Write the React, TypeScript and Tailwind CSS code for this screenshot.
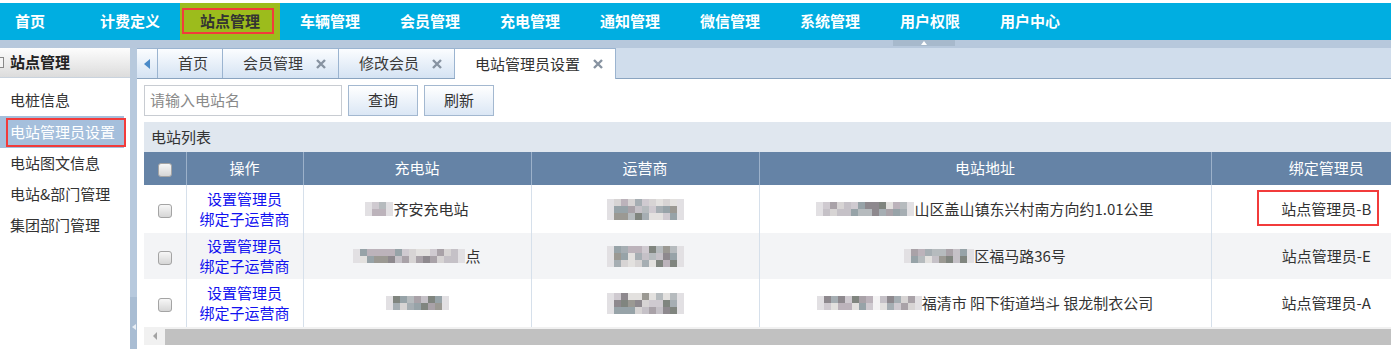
import React from 'react';

const navItems = ['首页', '计费定义', '站点管理', '车辆管理', '会员管理', '充电管理', '通知管理', '微信管理', '系统管理', '用户权限', '用户中心'];
const sideItems = ['电桩信息', '电站管理员设置', '电站图文信息', '电站&部门管理', '集团部门管理'];

const palette = ['#8e898e', '#a9a2a8', '#c5c1c7', '#b6bbbe', '#9b9993', '#d7d4d4', '#80857f', '#bcb3bb', '#e3e1df', '#a6aeb3', '#cfcad0', '#97a3a8'];

// pixelated (blurred) text block
function Mosaic({ cols, rows = 2, seed, gapAt }: { cols: number; rows?: number; seed: number; gapAt?: number }) {
  const cells: React.ReactNode[] = [];
  for (let r = 0; r < rows; r++) {
    for (let c = 0; c < cols; c++) {
      const n = Math.abs(Math.sin(seed * 97 + r * 31 + c * 13)) * 10000;
      let color = palette[Math.floor(n) % palette.length];
      if (c === 0 || c === cols - 1) color = '#e2e0e3';
      if (gapAt !== undefined && c === gapAt) color = '#f4f3f4';
      cells.push(<span key={r + '-' + c} className="block w-[7px] h-[7px]" style={{ background: color }} />);
    }
  }
  return (
    <span className="inline-grid align-middle" style={{ gridTemplateColumns: `repeat(${cols}, 7px)` }}>
      {cells}
    </span>
  );
}

function Checkbox() {
  return <span className="inline-block w-[14px] h-[14px] rounded-[3px] border border-[#a4a4a4] bg-gradient-to-b from-[#f7f7f7] to-[#d6d6d6] align-middle" />;
}

function CloseX() {
  return (
    <svg width="10" height="10" viewBox="0 0 10 10" className="shrink-0">
      <path d="M1 1L9 9M9 1L1 9" stroke="#8793a1" strokeWidth="2.4" />
    </svg>
  );
}

function Tab({ label, width, closable, active }: { label: string; width: string; closable?: boolean; active?: boolean }) {
  return (
    <div
      className={`${width} flex items-center pl-[20px] gap-[13px] border-r border-t border-[#9bb4d0] ${
        active ? 'bg-white h-[31px] -mb-px' : 'bg-gradient-to-b from-[#fbfdff] to-[#d5e3f3] h-[30px]'
      }`}
    >
      <span className={active ? 'text-[#333]' : 'text-[#3a3a3a]'}>{label}</span>
      {closable && <CloseX />}
    </div>
  );
}

const rows = [
  {
    station: (
      <>
        <Mosaic cols={4} seed={1} />
        <span>齐安充电站</span>
      </>
    ),
    opSeed: 4,
    address: (
      <>
        <Mosaic cols={14} seed={7} />
        <span>山区盖山镇东兴村南方向约1.01公里</span>
      </>
    ),
    admin: '站点管理员-B',
    bg: 'bg-white',
    h: 'h-[48px]',
    boxed: true,
  },
  {
    station: (
      <>
        <Mosaic cols={16} seed={2} />
        <span>点</span>
      </>
    ),
    opSeed: 5,
    address: (
      <>
        <Mosaic cols={10} seed={8} />
        <span>区福马路36号</span>
      </>
    ),
    admin: '站点管理员-E',
    bg: 'bg-[#f3f4f6]',
    h: 'h-[46px]',
  },
  {
    station: <Mosaic cols={9} seed={3} />,
    opSeed: 6,
    address: (
      <>
        <Mosaic cols={15} seed={9} gapAt={8} />
        <span>福清市 阳下街道垱斗 银龙制衣公司</span>
      </>
    ),
    admin: '站点管理员-A',
    bg: 'bg-white',
    h: 'h-[48px]',
  },
];

export default function App() {
  return (
    <div className="w-[1391px] h-[349px] overflow-hidden bg-white text-[15px] text-[#333] font-['Noto_Sans_CJK_SC','Noto_Sans',sans-serif]">
      {/* top nav */}
      <div className="h-[3px] bg-white" />
      <nav className="h-[37px] bg-[#00aee1] flex items-stretch font-bold">
        {navItems.map((item, i) => (
          <div
            key={item}
            className={`relative flex items-center ${i === 0 ? 'w-[80px] pl-[15px]' : 'w-[100px] justify-center'} ${
              i === 2 ? 'bg-[#9cbc1c] text-[#333]' : 'text-white'
            }`}
          >
            {item}
            {i === 2 && <span className="absolute left-[2px] top-[5px] w-[92px] h-[26px] border-2 border-[#f23b3b]" />}
          </div>
        ))}
      </nav>
      <div className="h-[8px] bg-[#b7c8dc] relative">
        <div className="absolute left-[893px] top-0 w-[62px] h-[6px] bg-[#a7b9cc] flex justify-center items-start">
          <span className="mt-[1px] w-0 h-0 border-l-[3px] border-r-[3px] border-b-[4px] border-l-transparent border-r-transparent border-b-white" />
        </div>
      </div>

      <div className="flex h-[301px]">
        {/* sidebar */}
        <aside className="w-[130px] shrink-0 bg-white">
          <div className="h-[30px] flex items-center gap-[6px] bg-gradient-to-b from-[#fdfdfd] to-[#dcdcdc] border-b border-[#c9d3de]">
            <span className="w-[4px] h-[11px] border border-l-0 border-[#888] bg-[#f4f4f4]" />
            <span className="font-bold text-[#222]">站点管理</span>
          </div>
          <div className="pt-[7px]">
            {sideItems.map((item, i) =>
              i === 1 ? (
                <div key={item} className="relative w-[124px] h-[32px] bg-[#a5bfdc] text-white flex items-center pl-[10px]">
                  {item}
                  <span className="absolute left-[6px] top-[2px] w-[120px] h-[29px] border-2 border-[#f23b3b]" />
                </div>
              ) : (
                <div key={item} className="h-[31px] flex items-center pl-[10px] text-[#333]">
                  {item}
                </div>
              )
            )}
          </div>
        </aside>

        {/* splitter */}
        <div className="w-[7px] shrink-0 bg-[#b7c9dd] flex flex-col">
          <div className="h-[249px]" />
          <div className="flex-1 bg-[#a9bdd3] flex justify-center pt-[27px]">
            <span className="w-0 h-0 border-t-[3px] border-b-[3px] border-r-[4px] border-t-transparent border-b-transparent border-r-[#e8eef5]" />
          </div>
        </div>

        {/* main */}
        <main className="flex-1 min-w-0 flex flex-col overflow-hidden">
          <div className="h-[31px] shrink-0 bg-[#d0ddec] border-b border-[#8aa4c0] flex items-end">
            <div className="w-[21px] h-[30px] border-r border-t border-[#9bb4d0] bg-gradient-to-b from-[#fbfdff] to-[#d5e3f3] flex items-center justify-center">
              <span className="w-0 h-0 border-t-[5px] border-b-[5px] border-r-[6px] border-t-transparent border-b-transparent border-r-[#4a8ac8]" />
            </div>
            <Tab label="首页" width="w-[65px]" />
            <Tab label="会员管理" width="w-[116px]" closable />
            <Tab label="修改会员" width="w-[116px]" closable />
            <Tab label="电站管理员设置" width="w-[161px]" closable active />
          </div>

          <div className="pl-[7px] pt-[6px]">
            <div className="flex gap-[6px] h-[31px]">
              <div className="w-[198px] border border-[#c8ccd2] flex items-center pl-[5px] text-[#8a8a8a]">请输入电站名</div>
              <button className="w-[70px] border border-[#a3b8d0] bg-gradient-to-b from-[#ffffff] to-[#dbe7f5] text-[#333]">查询</button>
              <button className="w-[70px] border border-[#a3b8d0] bg-gradient-to-b from-[#ffffff] to-[#dbe7f5] text-[#333]">刷新</button>
            </div>

            <div className="mt-[6px] bg-[#e0e7ef]">
              <div className="h-[30px] flex items-center pl-[7px] text-[#333]">电站列表</div>
              <table className="table-fixed border-collapse w-[1297px] bg-white">
                <colgroup>
                  <col className="w-[42px]" />
                  <col className="w-[117px]" />
                  <col className="w-[228px]" />
                  <col className="w-[228px]" />
                  <col className="w-[452px]" />
                  <col className="w-[230px]" />
                </colgroup>
                <thead>
                  <tr className="h-[33px] bg-[#6583a6] text-white">
                    <th className="font-normal text-center">
                      <Checkbox />
                    </th>
                    <th className="font-normal border-l border-[#9cb1ca]">操作</th>
                    <th className="font-normal border-l border-[#9cb1ca]">充电站</th>
                    <th className="font-normal border-l border-[#9cb1ca]">运营商</th>
                    <th className="font-normal border-l border-[#9cb1ca]">电站地址</th>
                    <th className="font-normal border-l border-[#9cb1ca]">绑定管理员</th>
                  </tr>
                </thead>
                <tbody>
                  {rows.map((r, i) => (
                    <tr key={i} className={`${r.h} ${r.bg}`}>
                      <td className="text-center">
                        <Checkbox />
                      </td>
                      <td className="border-l border-[#d6e0eb] text-center leading-[20px] text-[#1212f0]">
                        <div>设置管理员</div>
                        <div>绑定子运营商</div>
                      </td>
                      <td className="border-l border-[#d6e0eb]">
                        <div className="flex items-center justify-center">{r.station}</div>
                      </td>
                      <td className="border-l border-[#d6e0eb]">
                        <div className="flex items-center justify-center">
                          <Mosaic cols={11} rows={3} seed={r.opSeed} />
                        </div>
                      </td>
                      <td className="border-l border-[#d6e0eb]">
                        <div className="flex items-center justify-center">{r.address}</div>
                      </td>
                      <td className="border-l border-[#d6e0eb] relative text-center">
                        {r.admin}
                        {r.boxed && <span className="absolute left-[45px] top-[5px] w-[122px] h-[36px] border-2 border-[#f23b3b]" />}
                      </td>
                    </tr>
                  ))}
                </tbody>
              </table>
              {/* horizontal scrollbar */}
              <div className="h-[18px] bg-[#f1f1f1] flex">
                <div className="w-[21px] flex items-center justify-center">
                  <span className="w-0 h-0 border-t-[4px] border-b-[4px] border-r-[4px] border-t-transparent border-b-transparent border-r-[#a3a3a3]" />
                </div>
                <div className="flex-1 mt-[2px] bg-[#c1c1c1]" />
              </div>
            </div>
          </div>
        </main>
      </div>
    </div>
  );
}
